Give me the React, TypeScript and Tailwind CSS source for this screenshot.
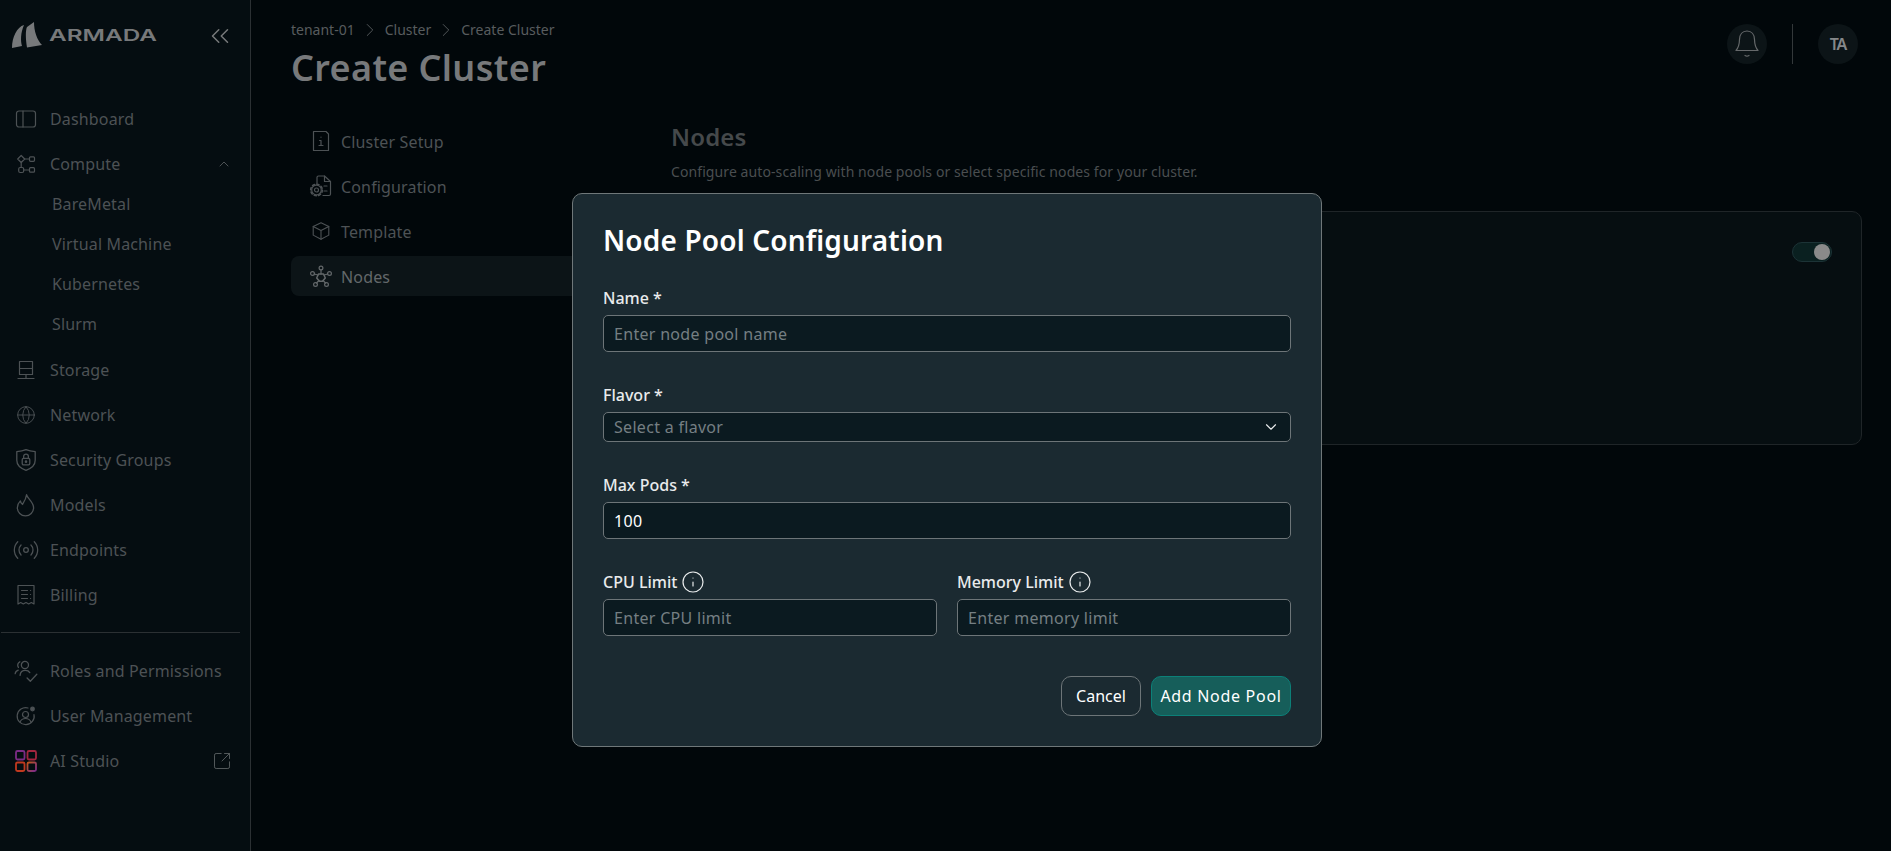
import type { ReactNode } from 'react'
import {
  ChevronDown,
  ChevronRight,
  ChevronUp,
  ChevronsLeft,
  Globe,
  Info,
  Radio,
  SquareArrowOutUpRight,
} from 'lucide-react'

function Svg({ size = 24, children }: { size?: number; children: ReactNode }) {
  return (
    <svg
      width={size}
      height={size}
      viewBox="0 0 24 24"
      fill="none"
      stroke="currentColor"
      strokeWidth={1.2}
      strokeLinecap="round"
      strokeLinejoin="round"
    >
      {children}
    </svg>
  )
}

const DashboardIcon = () => (
  <Svg>
    <rect x="2.500" y="4" width="19" height="16" rx="2.500" />
    <path d="M9 4v16" />
  </Svg>
)

const ComputeIcon = () => (
  <Svg>
    <path d="M7.200 3.500l3.500 3.500-3.500 3.500L3.700 7z" />
    <rect x="15.500" y="4.800" width="5" height="4.500" rx="1" />
    <path d="M10.700 7h4.800M7.200 10.500v5" />
    <rect x="4.700" y="15.500" width="5" height="5" rx="1.500" />
    <rect x="15.500" y="15.700" width="5" height="4.500" rx="1" />
    <path d="M9.700 18h5.800" />
  </Svg>
)

const StorageIcon = () => (
  <Svg>
    <rect x="5.500" y="3.500" width="13" height="7" />
    <rect x="5.500" y="10.500" width="13" height="6" />
    <path d="M12 16.500v4M4 20.500h16" />
  </Svg>
)

const ShieldLockIcon = () => (
  <Svg size={26}>
    <path d="M12 2.500c3 1.200 5.500 1.500 8.500 1.700v8c0 4.500-3.500 7.500-8.500 9.300-5-1.800-8.500-4.800-8.500-9.300v-8C6.500 4 9 3.700 12 2.500z" />
    <rect x="8.500" y="10.500" width="7" height="6" rx="1.200" />
    <path d="M9.800 10.500V8.700a2.200 2.200 0 0 1 4.400 0v1.800" />
    <circle cx="12" cy="13.500" r=".6" />
  </Svg>
)

const FlameIcon = () => (
  <Svg size={26}>
    <path d="M12.500 2.500c.6 3.500 6.500 6.500 6.500 12a7.500 7.500 0 0 1-15 0c0-2.800 1.300-4.800 2.800-6.300.2 1.500.8 2.600 2 3.300 1.600-2.500 3.300-5.500 3.700-9z" />
  </Svg>
)

const BillingIcon = () => (
  <Svg>
    <path d="M4 2.500h16v18.500l-2.700-1.500-2.600 1.500-2.700-1.500-2.700 1.500-2.600-1.500L4 21z" />
    <path d="M7.500 7.500h6M7.500 11.500h6M7.500 15.500h6M16.500 7.500h.1M16.500 11.500h.1M16.500 15.500h.1" />
  </Svg>
)

const RolesIcon = () => (
  <Svg size={26}>
    <circle cx="11" cy="6.500" r="3.300" />
    <path d="M6.300 3.500a3.500 3.500 0 0 0-1.300 5.200M2 14.500c.2-1.700 1.300-2.800 2.800-3.300M6.500 16c.3-2.800 2.200-4.500 5-4.500 1.800 0 3.200.7 4 2M13 18.500l3 3 6-6.500" />
  </Svg>
)

const UserGearIcon = () => (
  <Svg>
    <path d="M20 10.500A8.500 8.500 0 1 1 14 4" />
    <circle cx="11.500" cy="10.500" r="3" />
    <path d="M6 18c1-2.300 3-3.500 5.500-3.500S16 15.700 17 18" />
    <circle cx="18.500" cy="5" r="1.800" fill="currentColor" />
  </Svg>
)

const StudioIcon = () => (
  <svg width="24" height="24" viewBox="0 0 24 24" fill="none" strokeWidth="1.800">
    <defs>
      <linearGradient id="studio" x1="0" y1="0" x2="1" y2="1">
        <stop offset="0" stopColor="#c0561c" />
        <stop offset="1" stopColor="#7a2a8a" />
      </linearGradient>
    </defs>
    <rect x="2" y="2" width="8.500" height="8.500" rx="1.500" stroke="#7c2c86" />
    <rect x="13.500" y="2" width="8.500" height="8.500" rx="1.500" stroke="#a2263f" />
    <rect x="2" y="13.500" width="8.500" height="8.500" rx="1.500" stroke="#c0391f" />
    <rect x="13.500" y="13.500" width="8.500" height="8.500" rx="1.500" stroke="url(#studio)" />
  </svg>
)

const FileInfoIcon = () => (
  <Svg>
    <path d="M4.500 2.500h12.500l2.500 2.500v16.500h-15z" />
    <path d="M12 8v.2M10.500 11.500H12v5M10 16.500h4" />
  </Svg>
)

const FileGearIcon = () => (
  <Svg>
    <path d="M8 9.500V3.500a1.500 1.500 0 0 1 1.500-1.500h6l6 5.500v12.500a1.500 1.500 0 0 1-1.500 1.500h-6" />
    <path d="M15.500 2v5.500h6M15 12h3M15 17h3" />
    <circle cx="7.500" cy="16" r="2" />
    <circle cx="7.500" cy="16" r="4.800" />
    <circle cx="7.500" cy="16" r="5.800" strokeDasharray="2.200 2.300" strokeWidth="1.600" />
  </Svg>
)

const CubeIcon = () => (
  <Svg size={22}>
    <path d="M12 3l8.500 4v9.500L12 21l-8.500-4.500V7z" />
    <path d="M3.500 7l8.500 4.500L20.500 7M12 11.500V21" />
  </Svg>
)

const NodesIcon = () => (
  <Svg>
    <path d="M9.500 10l5 0 1.800 4-2.800 3.300h-3L7.700 14z" strokeWidth="1.500" />
    <circle cx="12" cy="4" r="1.900" />
    <circle cx="3.500" cy="9.500" r="1.900" />
    <circle cx="20.500" cy="9.500" r="1.900" />
    <circle cx="6.500" cy="20.500" r="1.900" />
    <circle cx="17.500" cy="20.500" r="1.900" />
    <path d="M12 5.900V10M5.300 10l3.500 1M18.700 10l-3.500 1M7.500 19l2.500-2.500M16.500 19L14 16.500" />
  </Svg>
)

const BellIcon = () => (
  <svg width="26" height="30" viewBox="0 0 26 30" fill="none" stroke="currentColor" strokeWidth="1.200" strokeLinecap="round" strokeLinejoin="round">
    <path d="M2 21.500c2.600-3 3.400-6 3.500-11C5.600 5.500 8.500 2 13 2s7.400 3.500 7.500 8.500c.1 5 .9 8 3.500 11z" />
    <path d="M11 26.500c1.300.9 2.700.9 4 0" />
  </svg>
)

const SailLogo = () => (
  <svg width="32" height="28" viewBox="0 0 32 28" fill="#77797b">
    <path d="M1 27C1 16 6 6 13 4c-3.500 8-3.500 16-2 21z" />
    <path d="M16 26.500c-1.500-9.500-1.500-17.500 0-20.500L23 1c0 9 3 18 8 23z" />
  </svg>
)

function NavRow({ icon, label, right }: { icon: ReactNode; label: string; right?: ReactNode }) {
  return (
    <div className="flex h-[45px] items-center pl-[10px] pr-[18px] text-[#4d5255]">
      <span className="flex w-[32px] shrink-0 items-center justify-center">{icon}</span>
      <span className="ml-[8px] flex-1 whitespace-nowrap">{label}</span>
      {right}
    </div>
  )
}

function Field({
  label,
  placeholder,
  value,
  info,
}: {
  label: string
  placeholder?: string
  value?: string
  info?: boolean
}) {
  return (
    <label className="block">
      <span className="flex h-[24px] items-center gap-[4px] font-medium tracking-normal text-[#e9ebec]">
        {label}
        {info ? <Info size={24} strokeWidth={1.200} /> : null}
      </span>
      <input
        readOnly
        value={value}
        placeholder={placeholder}
        className="mt-[5px] block h-[37px] w-full rounded-[5px] border border-[#6d7578] bg-[#0b1a20] px-[10px] pt-[1px] tracking-[0.3px] text-white outline-none placeholder:text-[#757f83]"
      />
    </label>
  )
}

export default function App() {
  const tabs = [
    { label: 'Cluster Setup', icon: <FileInfoIcon /> },
    { label: 'Configuration', icon: <FileGearIcon /> },
    { label: 'Template', icon: <CubeIcon /> },
    { label: 'Nodes', icon: <NodesIcon /> },
  ]

  return (
    <div className="relative flex h-[851px] w-[1891px] overflow-hidden bg-[#01070a] font-['Noto_Sans',sans-serif] text-base tracking-[0.15px]">
      <aside className="w-[251px] shrink-0 border-r border-[#2b3033] bg-[#050d11]">
        <div className="flex h-[96px] pl-[11px] pt-[21px]">
          <SailLogo />
          <span className="ml-[6px] mt-[4px] h-[20px] w-[70px] origin-left scale-x-[1.52] font-['Inter',sans-serif] text-[16px] font-semibold leading-[20px] tracking-normal text-[#77797b]">
            ARMADA
          </span>
          <span className="ml-[86px] text-[#77797b]">
            <ChevronsLeft size={30} strokeWidth={1.200} />
          </span>
        </div>
        <NavRow icon={<DashboardIcon />} label="Dashboard" />
        <NavRow
          icon={<ComputeIcon />}
          label="Compute"
          right={<ChevronUp size={16} strokeWidth={1.500} />}
        />
        <div className="-mt-[2px] mb-[3px] pl-[52px] text-[#4d5255]">
          <div className="flex h-[40px] items-center">BareMetal</div>
          <div className="flex h-[40px] items-center">Virtual Machine</div>
          <div className="flex h-[40px] items-center">Kubernetes</div>
          <div className="flex h-[40px] items-center">Slurm</div>
        </div>
        <NavRow icon={<StorageIcon />} label="Storage" />
        <NavRow icon={<Globe size={20} strokeWidth={1.100} />} label="Network" />
        <NavRow icon={<ShieldLockIcon />} label="Security Groups" />
        <NavRow icon={<FlameIcon />} label="Models" />
        <NavRow icon={<Radio size={28} strokeWidth={1.100} />} label="Endpoints" />
        <NavRow icon={<BillingIcon />} label="Billing" />
        <div className="my-[15px] ml-[1px] mr-[10px] border-t border-[#2b3033]" />
        <NavRow icon={<RolesIcon />} label="Roles and Permissions" />
        <NavRow icon={<UserGearIcon />} label="User Management" />
        <NavRow
          icon={<StudioIcon />}
          label="AI Studio"
          right={
            <span className="text-[#5a5f61]">
              <SquareArrowOutUpRight size={20} strokeWidth={1.100} />
            </span>
          }
        />
      </aside>

      <main className="min-w-0 flex-1 pl-[40px] pr-[29px]">
        <header className="flex h-[98px] justify-between pt-[19px]">
          <div>
            <div className="flex h-[22px] items-center gap-[4px] text-sm tracking-normal text-[#585c5e]">
              <span>tenant-01</span>
              <ChevronRight size={22} strokeWidth={1} />
              <span>Cluster</span>
              <ChevronRight size={22} strokeWidth={1} />
              <span>Create Cluster</span>
            </div>
            <h1 className="mt-[4px] text-[36px] font-semibold leading-[46px] tracking-[0.35px] text-[#77797b]">
              Create Cluster
            </h1>
          </div>
          <div className="mr-[4px] mt-[5px] flex h-[40px] items-center">
            <div className="flex h-[40px] w-[40px] items-center justify-center rounded-full bg-[#0c1417] text-[#66696b]">
              <BellIcon />
            </div>
            <div className="mx-[25px] h-[40px] w-px bg-[#33383a]" />
            <div className="flex h-[40px] w-[40px] items-center justify-center rounded-full bg-[#0c1417] text-base font-semibold tracking-[-1px] text-[#85888a]">
              TA
            </div>
          </div>
        </header>

        <div className="flex">
          <nav className="w-[380px] shrink-0 pt-[23px]">
            {tabs.map((t) => (
              <div
                key={t.label}
                className={`mb-[5px] flex h-[40px] items-center rounded-[8px] pl-[18px] ${
                  t.label === 'Nodes' ? 'bg-[#0c1417] text-[#63686a]' : 'text-[#4d5255]'
                }`}
              >
                <span className="flex w-[24px] justify-center">{t.icon}</span>
                <span className="ml-[8px] pt-[2px]">{t.label}</span>
              </div>
            ))}
          </nav>
          <section className="min-w-0 flex-1">
            <h2 className="mt-[20px] text-[24px] font-semibold leading-[38px] text-[#45494b]">Nodes</h2>
            <p className="mt-[6px] text-sm leading-[20px] tracking-[0.09px] text-[#4a4e50]">
              Configure auto-scaling with node pools or select specific nodes for your cluster.
            </p>
            <div className="mt-[29px] flex h-[234px] justify-end rounded-[10px] border border-[#1f2528] bg-[#060e11] pr-[29px] pt-[30px]">
              <div className="flex h-[20px] w-[40px] items-center justify-end rounded-full border border-[#1c3336] bg-[#0a2020] pr-[1px]">
                <div className="h-[16px] w-[16px] rounded-full bg-[#8a8a8a]" />
              </div>
            </div>
          </section>
        </div>
      </main>

      <div className="absolute left-[572px] top-[193px] h-[554px] w-[750px] rounded-[10px] border border-[#6f7779] bg-[#1b2a31] px-[30px] pt-[26px]">
        <h3 className="text-[28px] font-semibold leading-[40px] tracking-[0.16px] text-white">
          Node Pool Configuration
        </h3>
        <div className="mt-[26px]">
          <Field label="Name *" placeholder="Enter node pool name" />
        </div>
        <div className="mt-[31px]">
          <span className="flex h-[24px] items-center font-medium tracking-normal text-[#e9ebec]">Flavor *</span>
          <button
            type="button"
            className="mt-[5px] flex h-[30px] w-full items-center justify-between rounded-[5px] border border-[#6d7578] bg-[#0b1a20] px-[10px] tracking-[0.3px] text-[#757f83]"
          >
            Select a flavor
            <ChevronDown size={18} strokeWidth={1.500} className="text-[#e9ebec]" />
          </button>
        </div>
        <div className="mt-[31px]">
          <Field label="Max Pods *" value="100" />
        </div>
        <div className="mt-[31px] grid grid-cols-2 gap-[20px]">
          <Field label="CPU Limit" placeholder="Enter CPU limit" info />
          <Field label="Memory Limit" placeholder="Enter memory limit" info />
        </div>
        <div className="mt-[40px] flex justify-end gap-[10px]">
          <button
            type="button"
            className="h-[40px] w-[80px] rounded-[10px] border border-[#6d7578] tracking-normal text-white"
          >
            Cancel
          </button>
          <button
            type="button"
            className="h-[40px] w-[140px] rounded-[10px] border border-[#0c8078] bg-[#165e5a] tracking-[0.7px] text-white"
          >
            Add Node Pool
          </button>
        </div>
      </div>
    </div>
  )
}
